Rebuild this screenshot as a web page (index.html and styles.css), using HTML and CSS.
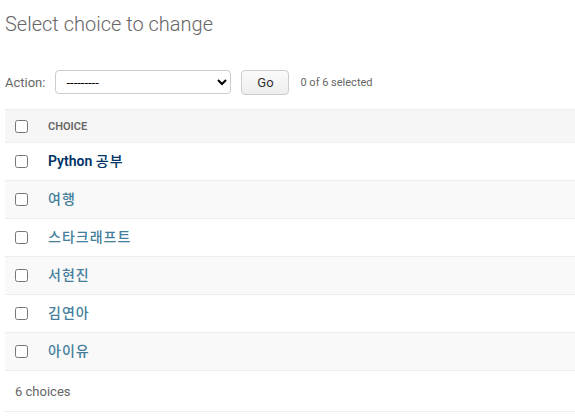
FILE: index.html
```html
<!DOCTYPE html>
<html>
<head>
<meta charset="utf-8">
<link rel="stylesheet" href="styles.css">
</head>
<body>
<div class="content">
  <h1 class="title">Select choice to change</h1>
  <div class="actions">
    <label class="action-label">Action:</label>
    <select class="action-select"><option>---------</option></select>
    <button class="go">Go</button>
    <span class="counter">0 of 6 selected</span>
  </div>
  <table class="results">
    <thead>
      <tr><th class="cb"><input type="checkbox"></th><th class="col">Choice</th></tr>
    </thead>
    <tbody>
      <tr class="row1"><td class="cb"><input type="checkbox"></td><th class="name"><a class="hover">Python <span class="ko">공부</span></a></th></tr>
      <tr class="row2"><td class="cb"><input type="checkbox"></td><th class="name"><a><span class="ko">여행</span></a></th></tr>
      <tr class="row1"><td class="cb"><input type="checkbox"></td><th class="name"><a><span class="ko">스타크래프트</span></a></th></tr>
      <tr class="row2"><td class="cb"><input type="checkbox"></td><th class="name"><a><span class="ko">서현진</span></a></th></tr>
      <tr class="row1"><td class="cb"><input type="checkbox"></td><th class="name"><a><span class="ko">김연아</span></a></th></tr>
      <tr class="row2"><td class="cb"><input type="checkbox"></td><th class="name"><a><span class="ko">아이유</span></a></th></tr>
    </tbody>
  </table>
  <p class="paginator">6 choices</p>
</div>
</body>
</html>
```
FILE: styles.css
```css
html, body { margin: 0; padding: 0; background: #fff; }
body { font-family: Roboto, "Noto Sans CJK KR", sans-serif; color: #333; }
.content { padding: 12px 0 0 5px; }
.title { margin: 0; font-size: 20px; line-height: 24px; font-weight: 300; color: #666; }
.actions { display: flex; align-items: center; margin-top: 34px; height: 24px; }
.action-label { font-size: 13px; color: #666; margin-right: 10px; }
.action-select { width: 176px; height: 24px; border: 1px solid #ccc; border-radius: 4px; background: #fff; font-family: Roboto, sans-serif; font-size: 13px; padding: 0 6px; color: #000; }
.go { margin-left: 10px; width: 48px; height: 25px; border: 1px solid #ccc; border-radius: 4px; background: linear-gradient(#fafafa, #eee); font-family: Roboto, sans-serif; font-size: 13px; color: #333; padding: 0; }
.counter { margin-left: 11px; font-size: 11px; color: #666; }
.results { margin-top: 15px; width: 570px; border-collapse: collapse; }
.results thead tr { background: #f6f6f6; border-top: 1px solid #eee; border-bottom: 1px solid #eee; height: 33px; }
.results td, .results th { padding: 0; text-align: left; vertical-align: middle; }
.cb { width: 36px; padding-left: 7px !important; }
.cb input { margin: 0 0 0 3px; width: 13px; height: 13px; display: block; }
.col { font-size: 11px; font-weight: 600; color: #666; text-transform: uppercase; }
.results tbody tr { height: 38px; border-bottom: 1px solid #eee; }
.row2 { background: #f9f9f9; }
.name { font-size: 14px; font-weight: 600; line-height: 16px; padding-bottom: 2px !important; }
.name a { color: #447e9b; }
.name a.hover { color: #036; }
.ko { font-family: "Noto Sans CJK KR", sans-serif; font-weight: 500; letter-spacing: 1px; }
.paginator { margin: 0; width: 570px; height: 41px; line-height: 41px; padding-left: 10px; box-sizing: border-box; font-size: 13px; color: #666; border-bottom: 1px solid #eee; }
```
